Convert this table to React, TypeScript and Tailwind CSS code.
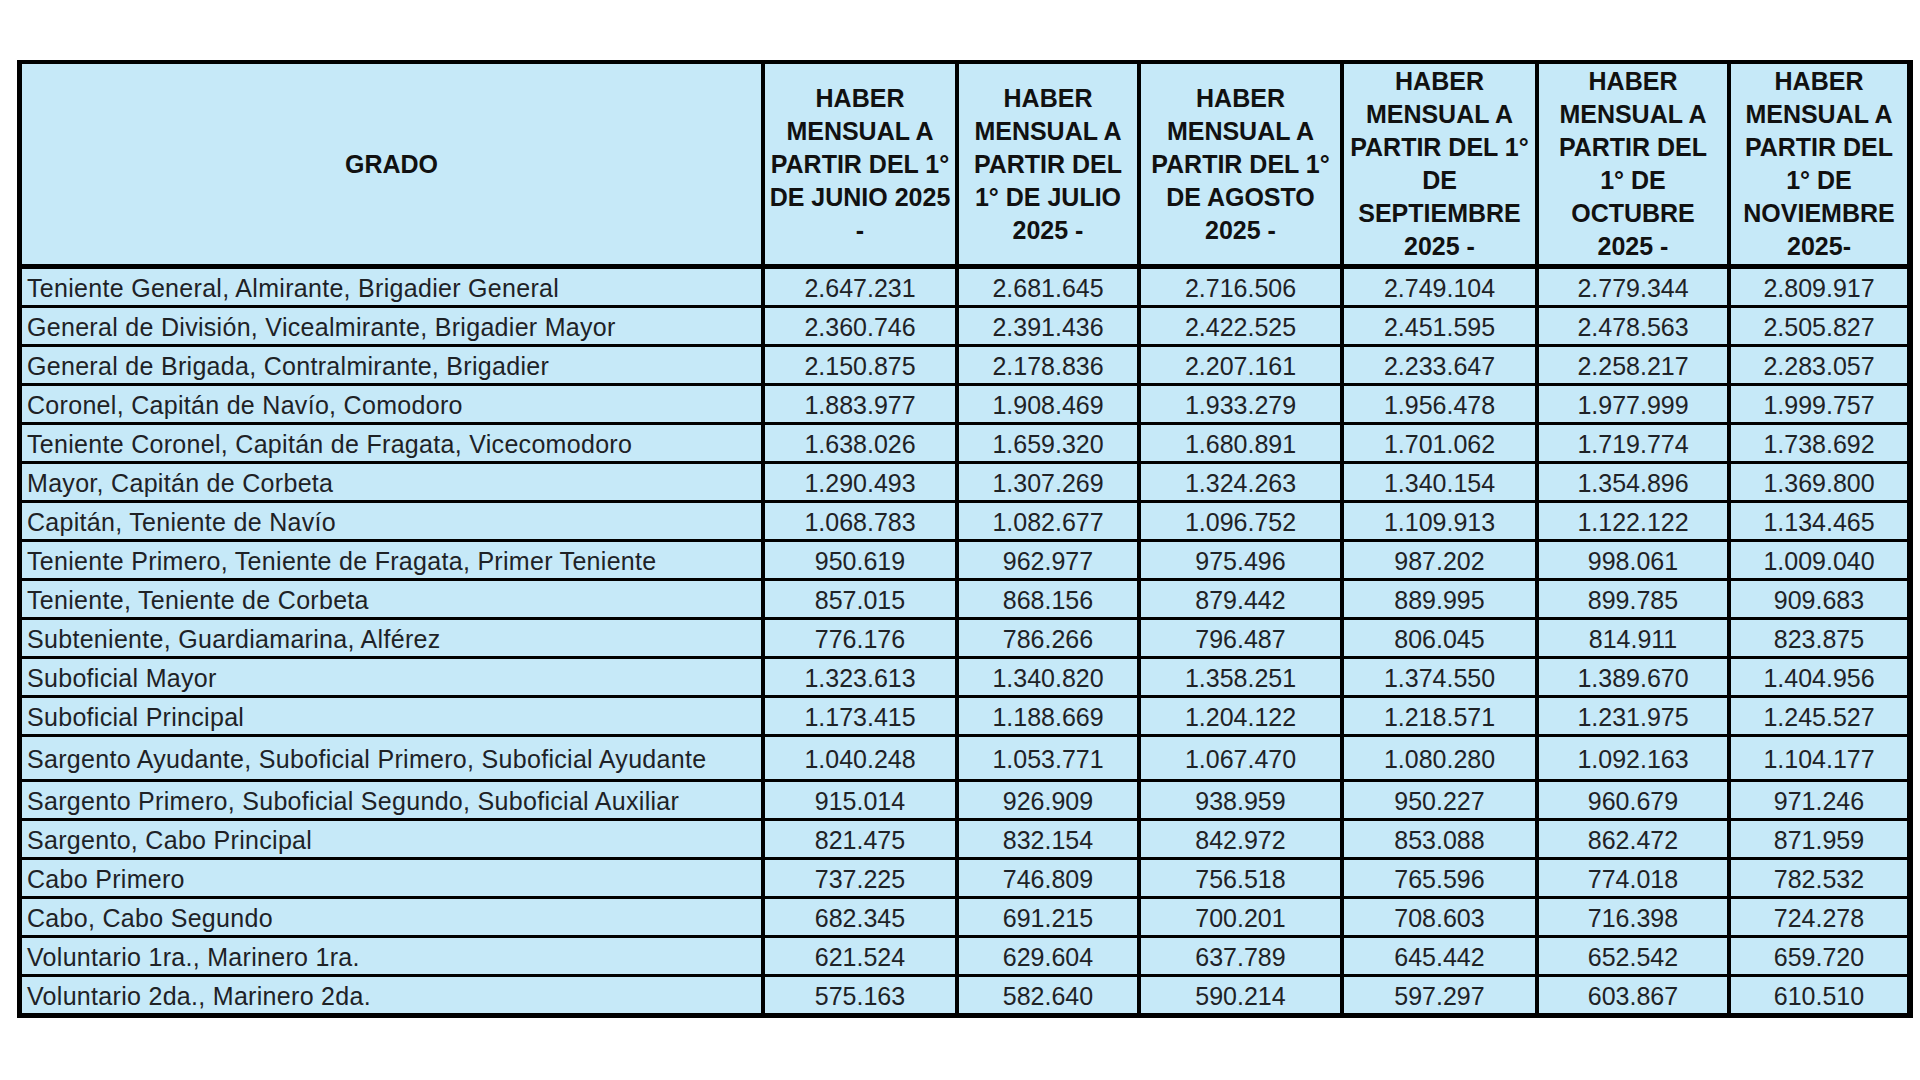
import React from "react";

const headers: string[][] = [
  ["HABER", "MENSUAL A", "PARTIR DEL 1°", "DE JUNIO 2025", "-"],
  ["HABER", "MENSUAL A", "PARTIR DEL", "1° DE JULIO", "2025 -"],
  ["HABER", "MENSUAL A", "PARTIR DEL 1°", "DE AGOSTO", "2025 -"],
  ["HABER", "MENSUAL A", "PARTIR DEL 1°", "DE", "SEPTIEMBRE", "2025 -"],
  ["HABER", "MENSUAL A", "PARTIR DEL", "1° DE", "OCTUBRE", "2025 -"],
  ["HABER", "MENSUAL A", "PARTIR DEL", "1° DE", "NOVIEMBRE", "2025-"],
];

const rows: string[][] = [
  ["Teniente General, Almirante, Brigadier General", "2.647.231", "2.681.645", "2.716.506", "2.749.104", "2.779.344", "2.809.917"],
  ["General de División, Vicealmirante, Brigadier Mayor", "2.360.746", "2.391.436", "2.422.525", "2.451.595", "2.478.563", "2.505.827"],
  ["General de Brigada, Contralmirante, Brigadier", "2.150.875", "2.178.836", "2.207.161", "2.233.647", "2.258.217", "2.283.057"],
  ["Coronel, Capitán de Navío, Comodoro", "1.883.977", "1.908.469", "1.933.279", "1.956.478", "1.977.999", "1.999.757"],
  ["Teniente Coronel, Capitán de Fragata, Vicecomodoro", "1.638.026", "1.659.320", "1.680.891", "1.701.062", "1.719.774", "1.738.692"],
  ["Mayor, Capitán de Corbeta", "1.290.493", "1.307.269", "1.324.263", "1.340.154", "1.354.896", "1.369.800"],
  ["Capitán, Teniente de Navío", "1.068.783", "1.082.677", "1.096.752", "1.109.913", "1.122.122", "1.134.465"],
  ["Teniente Primero, Teniente de Fragata, Primer Teniente", "950.619", "962.977", "975.496", "987.202", "998.061", "1.009.040"],
  ["Teniente, Teniente de Corbeta", "857.015", "868.156", "879.442", "889.995", "899.785", "909.683"],
  ["Subteniente, Guardiamarina, Alférez", "776.176", "786.266", "796.487", "806.045", "814.911", "823.875"],
  ["Suboficial Mayor", "1.323.613", "1.340.820", "1.358.251", "1.374.550", "1.389.670", "1.404.956"],
  ["Suboficial Principal", "1.173.415", "1.188.669", "1.204.122", "1.218.571", "1.231.975", "1.245.527"],
  ["Sargento Ayudante, Suboficial Primero, Suboficial Ayudante", "1.040.248", "1.053.771", "1.067.470", "1.080.280", "1.092.163", "1.104.177"],
  ["Sargento Primero, Suboficial Segundo, Suboficial Auxiliar", "915.014", "926.909", "938.959", "950.227", "960.679", "971.246"],
  ["Sargento, Cabo Principal", "821.475", "832.154", "842.972", "853.088", "862.472", "871.959"],
  ["Cabo Primero", "737.225", "746.809", "756.518", "765.596", "774.018", "782.532"],
  ["Cabo, Cabo Segundo", "682.345", "691.215", "700.201", "708.603", "716.398", "724.278"],
  ["Voluntario 1ra., Marinero 1ra.", "621.524", "629.604", "637.789", "645.442", "652.542", "659.720"],
  ["Voluntario 2da., Marinero 2da.", "575.163", "582.640", "590.214", "597.297", "603.867", "610.510"],
];

export default function App() {
  return (
    <div className="min-h-screen w-full bg-white pt-[60px] pl-[17px] font-['Liberation_Sans',Arial,sans-serif]">
      <div className="inline-block bg-black pt-[4px] pl-[5px] pr-[6px] pb-[5px]">
        <div className="grid grid-cols-[739px_190px_178px_199px_191px_188px_176px] gap-x-[4px] gap-y-[3px]">
          <div className="h-[202px] border-b-2 border-black bg-[#c6e9f8] flex items-center justify-center pt-[2px] text-[25px] font-bold text-[#111]">
            GRADO
          </div>
          {headers.map((lines, i) => (
            <div
              key={i}
              className="h-[202px] border-b-2 border-black bg-[#c6e9f8] flex flex-col items-center justify-center text-[25px] leading-[33px] font-bold text-[#111] text-center"
            >
              {lines.map((l, j) => (
                <div key={j} className="whitespace-nowrap">
                  {l}
                </div>
              ))}
            </div>
          ))}
          {rows.map((r, ri) => {
            const h = ri === 12 ? "h-[42px]" : "h-[36px]";
            return (
              <React.Fragment key={ri}>
                <div className={`${h} bg-[#c6e9f8] flex items-center pl-[5px] pt-[3px] text-[25px] tracking-[0.3px] text-[#1e2226] whitespace-nowrap`}>
                  {r[0]}
                </div>
                {r.slice(1).map((v, vi) => (
                  <div key={vi} className={`${h} bg-[#c6e9f8] flex items-center justify-center pt-[3px] text-[25px] text-[#1e2226]`}>
                    {v}
                  </div>
                ))}
              </React.Fragment>
            );
          })}
        </div>
      </div>
    </div>
  );
}
